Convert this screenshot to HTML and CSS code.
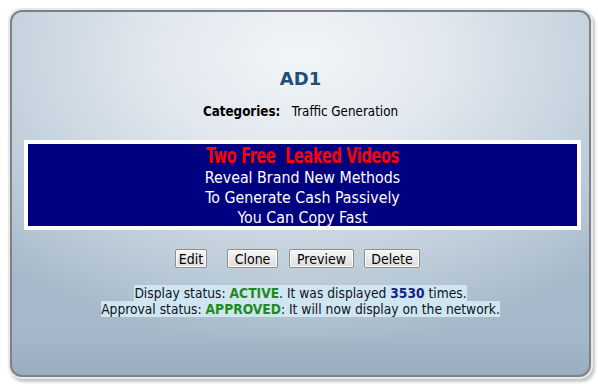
FILE: index.html
```html
<!DOCTYPE html>
<html>
<head>
	<meta charset="UTF-8">
	<title>AD1</title>
	<link rel="stylesheet" href="styles.css">
</head>
<body>
	<div class="panel">
		<h2 class="ad_title">AD1</h2>
		<p class="categories"><b>Categories:</b>&nbsp;&nbsp; Traffic Generation</p>

		<div class="ad_box">
			<div class="ad_head">Two Free &nbsp;Leaked Videos</div>
			<div class="ad_line">Reveal Brand New Methods</div>
			<div class="ad_line">To Generate Cash Passively</div>
			<div class="ad_line">You Can Copy Fast</div>
		</div>

		<div class="buttons">
			<button class="btn btn_edit">Edit</button>
			<button class="btn btn_clone">Clone</button>
			<button class="btn btn_preview">Preview</button>
			<button class="btn btn_delete">Delete</button>
		</div>

		<div class="status">
			<span class="hl">Display status: <b class="ok">ACTIVE</b>. It was displayed <b class="count">3530</b> times.</span><br>
			<span class="hl">Approval status: <b class="ok">APPROVED</b>: It will now display on the network.</span>
		</div>
	</div>
</body>
</html>
```

FILE: styles.css
```css
body {
	margin: 0;
	background: #ffffff;
	font-family: "DejaVu Sans Condensed", "DejaVu Sans", sans-serif;
	width: 598px;
	height: 384px;
	overflow: hidden;
}

.panel {
	box-sizing: border-box;
	margin: 10px 0 0 10px;
	width: 581px;
	height: 367px;
	border: 2px solid #7d8186;
	border-radius: 12px;
	box-shadow: 0 0 0 2px #e6e8ea, 2px 3px 3px 2px #c4c7ca;
	background:
		linear-gradient(to bottom, rgba(0, 0, 0, 0) 88%, rgba(120, 140, 160, 0.25) 100%),
		radial-gradient(ellipse 75% 80% at 50% 12%, #f2f5f7 0%, #e0e7ee 35%, #bfcdda 75%, #a6b9ca 100%);
	text-align: center;
	padding-top: 52px;
}

.ad_title {
	margin: 0;
	font-family: "DejaVu Sans", sans-serif;
	font-size: 18px;
	line-height: 30px;
	color: #1f4e79;
}

.categories {
	margin: 10px 0 0 0;
	font-size: 13.3px;
	line-height: 16px;
	color: #000;
}

.ad_box {
	box-sizing: border-box;
	margin: 20px 0 0 12px;
	width: 557px;
	height: 90px;
	border: 4px solid #ffffff;
	background: #000080;
	padding-top: 0;
}

.ad_head {
	font-family: Impact, "Liberation Sans Narrow", "DejaVu Sans Condensed", sans-serif;
	font-weight: bold;
	font-size: 21px;
	line-height: 24px;
	color: #ff0000;
	transform: scaleX(0.76);
	letter-spacing: -0.3px;
}

.ad_line {
	font-size: 15.8px;
	line-height: 20px;
	color: #ffffff;
}

.buttons {
	margin-top: 19px;
	display: flex;
	justify-content: center;
	padding-right: 6px;
}

.btn {
	height: 19px;
	padding: 0;
	font-family: "DejaVu Sans Condensed", "DejaVu Sans", sans-serif;
	font-size: 14px;
	color: #000;
	border: 1px solid #8e8f8f;
	border-radius: 2px;
	background: linear-gradient(#f6f6f6, #dddddd);
	box-shadow: inset 0 0 0 1px #fbfbfb;
}

.btn_edit {
	width: 32px;
	margin-right: 20px;
}

.btn_clone {
	width: 51px;
	margin-right: 11px;
}

.btn_preview {
	width: 65px;
	margin-right: 10px;
}

.btn_delete {
	width: 56px;
}

.status {
	margin-top: 17px;
	font-size: 13.7px;
	line-height: 16px;
	color: #111122;
}

.hl {
	background: #cfe6f1;
}

.ok {
	color: #1e8a1e;
}

.count {
	color: #1a237e;
}
```
